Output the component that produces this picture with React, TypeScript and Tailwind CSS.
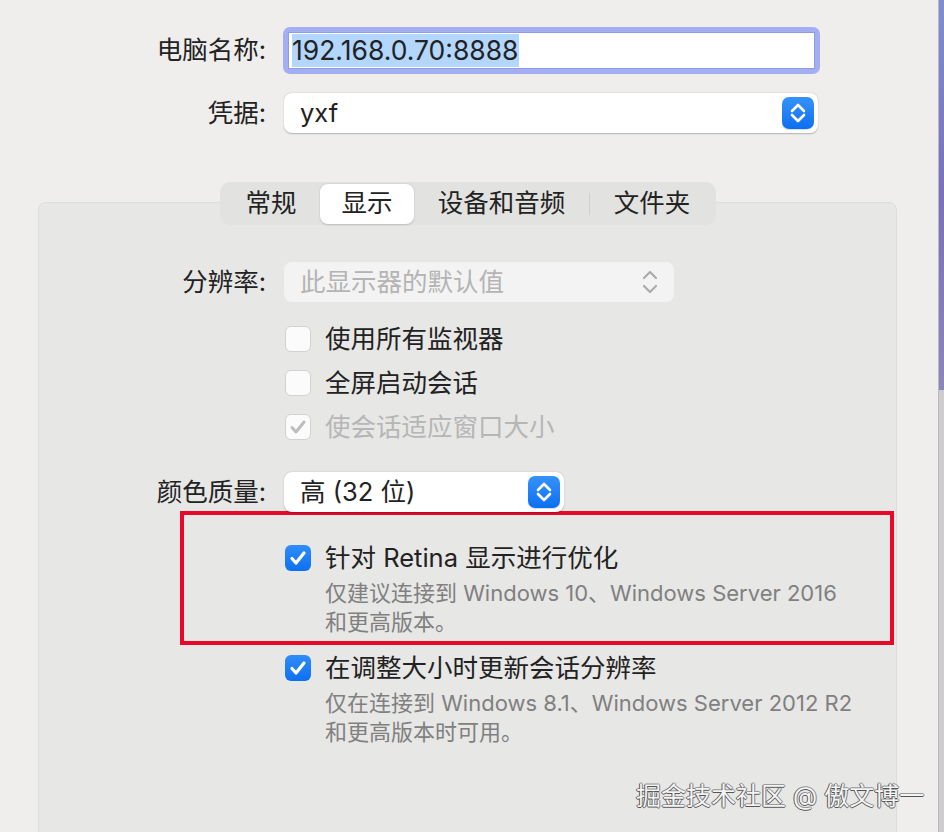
import React from 'react';

type CheckState = 'off' | 'on' | 'dimmed';

function Stepper() {
  return (
    <div className="flex h-[32px] w-[32px] items-center justify-center rounded-[7px] bg-gradient-to-b from-[#3592fa] to-[#0b6ff1] shadow-[0_1px_1px_rgba(0,0,0,0.15)]">
      <svg width="32" height="32" viewBox="0 0 32 32" fill="none">
        <path d="M10 14 L16 8 L22 14" stroke="white" strokeWidth="2.6" strokeLinecap="round" strokeLinejoin="round" />
        <path d="M10 18 L16 24 L22 18" stroke="white" strokeWidth="2.6" strokeLinecap="round" strokeLinejoin="round" />
      </svg>
    </div>
  );
}

function Popup({ text, width, disabled }: { text: string; width: string; disabled?: boolean }) {
  return (
    <div
      className={`flex h-[40px] ${width} items-center justify-between rounded-[8px] pl-[16px] pr-[4px] text-[25.5px] ${
        disabled
          ? 'bg-[#f3f3f3] text-[#b4b4b4]'
          : 'bg-white shadow-[0_0.5px_1.5px_rgba(0,0,0,0.25)]'
      }`}
    >
      <span className="leading-[32px]">{text}</span>
      {disabled ? (
        <svg width="32" height="32" viewBox="0 0 32 32" fill="none" className="mr-[4px]">
          <path d="M10 12 L16 6 L22 12" stroke="#ababab" strokeWidth="2.2" strokeLinecap="round" strokeLinejoin="round" />
          <path d="M10 20 L16 26 L22 20" stroke="#ababab" strokeWidth="2.2" strokeLinecap="round" strokeLinejoin="round" />
        </svg>
      ) : (
        <Stepper />
      )}
    </div>
  );
}

function Checkbox({ state }: { state: CheckState }) {
  if (state === 'on') {
    return (
      <div className="flex h-[26px] w-[26px] shrink-0 items-center justify-center rounded-[6px] bg-gradient-to-b from-[#2f8cf9] to-[#0c70f0]">
        <svg width="26" height="26" viewBox="0 0 26 26" fill="none">
          <path d="M7 13.5 L11 18 L19 8" stroke="white" strokeWidth="3.2" strokeLinecap="round" strokeLinejoin="round" />
        </svg>
      </div>
    );
  }
  return (
    <div className="flex h-[26px] w-[26px] shrink-0 items-center justify-center rounded-[6px] border border-[#d2d2d2] bg-[#fbfbfb]">
      {state === 'dimmed' && (
        <svg width="24" height="24" viewBox="0 0 24 24" fill="none">
          <path d="M6 12.5 L10 17 L18 7" stroke="#bdbdbd" strokeWidth="3" strokeLinecap="round" strokeLinejoin="round" />
        </svg>
      )}
    </div>
  );
}

function CheckRow({ state, label }: { state: CheckState; label: string }) {
  return (
    <div className="flex h-[32px] items-center gap-[14px]">
      <Checkbox state={state} />
      <span className={`text-[25.5px] leading-[32px] ${state === 'dimmed' ? 'text-[#b6b6b6]' : ''}`}>{label}</span>
    </div>
  );
}

function Option({ title, lines }: { title: string; lines: string[] }) {
  return (
    <div>
      <CheckRow state="on" label={title} />
      <div className="mt-[5px] pl-[40px] text-[22px] leading-[29px] text-[#808080]">
        {lines.map((l) => (
          <div key={l}>{l}</div>
        ))}
      </div>
    </div>
  );
}

export default function App() {
  return (
    <div className="relative flex h-[832px] w-[944px] overflow-hidden bg-[#efeeed] font-['Inter','Noto_Sans_CJK_SC',sans-serif] text-[#222222]">
      <div className="flex w-[938px] shrink-0 flex-col">
        {/* Computer name */}
        <div className="mt-[27px] flex h-[47px] shrink-0 items-center">
          <div className="w-[266px] text-right text-[25.5px]">电脑名称:</div>
          <div className="ml-[17px] h-[47px] w-[537px] rounded-[7px] bg-[#a3aef3] p-[5px]">
            <div className="flex h-full items-center border border-[#8e9be7] bg-white pl-[3px]">
              <span className="bg-[#b3d6fd] text-[26.5px] leading-[33px]">192.168.0.70:8888</span>
            </div>
          </div>
        </div>

        {/* Credentials */}
        <div className="mt-[19px] flex h-[40px] shrink-0 items-center">
          <div className="w-[266px] text-right text-[25.5px]">凭据:</div>
          <div className="ml-[18px]">
            <Popup text="yxf" width="w-[534px]" />
          </div>
        </div>

        {/* Tabs */}
        <div className="relative z-10 ml-[220px] mt-[49px] flex h-[43px] w-[496px] shrink-0 items-center rounded-[10px] bg-[#e2e2e1] px-[2px] text-[25.5px]">
          <div className="flex h-[40px] w-[98px] items-center justify-center">常规</div>
          <div className="flex h-[40px] w-[94px] items-center justify-center rounded-[8px] bg-white shadow-[0_0.5px_2px_rgba(0,0,0,0.18)]">显示</div>
          <div className="flex h-[40px] w-[175px] items-center justify-center">设备和音频</div>
          <div className="h-[22px] w-px bg-[#cfcfcf]" />
          <div className="flex h-[40px] w-[124px] items-center justify-center">文件夹</div>
        </div>

        {/* Group box */}
        <div className="-mt-[23px] ml-[38px] h-[700px] w-[859px] shrink-0 rounded-t-[8px] border border-[#dddddc] bg-[#e7e7e6] pt-[59px]">
          <div className="flex h-[40px] items-center">
            <div className="w-[227px] text-right text-[25.5px]">分辨率:</div>
            <div className="ml-[18px]">
              <Popup text="此显示器的默认值" width="w-[390px]" disabled />
            </div>
          </div>

          <div className="ml-[246px] mt-[21px] flex flex-col gap-[12px]">
            <CheckRow state="off" label="使用所有监视器" />
            <CheckRow state="off" label="全屏启动会话" />
            <CheckRow state="dimmed" label="使会话适应窗口大小" />
          </div>

          <div className="mt-[29px] flex h-[40px] items-center">
            <div className="w-[227px] text-right text-[25.5px]">颜色质量:</div>
            <div className="ml-[18px]">
              <Popup text="高 (32 位)" width="w-[280px]" />
            </div>
          </div>

          <div className="-mt-[1px] ml-[141px] h-[134px] w-[714px] border-4 border-[#e8092a] pl-[101px] pt-[27px]">
            <Option
              title="针对 Retina 显示进行优化"
              lines={['仅建议连接到 Windows 10、Windows Server 2016', '和更高版本。']}
            />
          </div>

          <div className="ml-[246px] mt-[7px]">
            <Option
              title="在调整大小时更新会话分辨率"
              lines={['仅在连接到 Windows 8.1、Windows Server 2012 R2', '和更高版本时可用。']}
            />
          </div>
        </div>
      </div>

      {/* desktop edge */}
      <div className="flex w-[6px] shrink-0 flex-col border-l border-[#b9b9c4]">
        <div className="h-[390px] bg-gradient-to-b from-[#7d8fd0] via-[#7a70bb] to-[#8c86b8]" />
        <div className="flex-1 bg-[#cdcdcd]" />
      </div>

      {/* watermark */}
      <div className="absolute left-[636px] top-[780px] text-[25px] leading-[32px] text-[#f4f4f4] [text-shadow:-1px_0_0_#555,0_1px_0_#555,1px_0_0_#888,0_-1px_0_#999]">
        掘金技术社区 @ 傲文博一
      </div>
    </div>
  );
}
